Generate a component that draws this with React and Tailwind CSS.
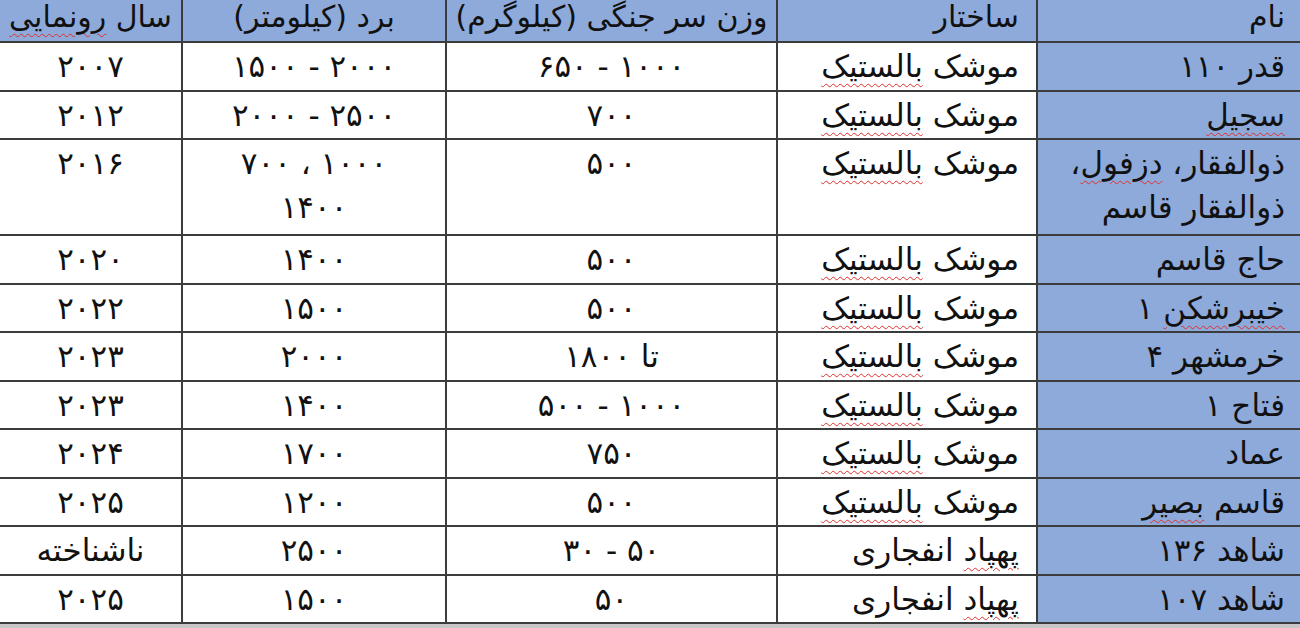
import React from "react";

const rows = [
  { name: "قدر ۱۱۰", type: "bal", warhead: "۱۰۰۰ - ۶۵۰", range: "۲۰۰۰ - ۱۵۰۰", year: "۲۰۰۷" },
  { name: <Wavy>سجیل</Wavy>, type: "bal", warhead: "۷۰۰", range: "۲۵۰۰ - ۲۰۰۰", year: "۲۰۱۲" },
  {
    name: (
      <>
        ذوالفقار، <Wavy>دزفول</Wavy>،
        <br />
        ذوالفقار قاسم
      </>
    ),
    type: "bal",
    warhead: "۵۰۰",
    range: (
      <>
        ۱۰۰۰ ، ۷۰۰
        <br />
        ۱۴۰۰
      </>
    ),
    year: "۲۰۱۶",
    tall: true,
  },
  { name: "حاج قاسم", type: "bal", warhead: "۵۰۰", range: "۱۴۰۰", year: "۲۰۲۰" },
  { name: <><Wavy>خیبرشکن</Wavy> ۱</>, type: "bal", warhead: "۵۰۰", range: "۱۵۰۰", year: "۲۰۲۲" },
  { name: "خرمشهر ۴", type: "bal", warhead: "تا ۱۸۰۰", range: "۲۰۰۰", year: "۲۰۲۳" },
  { name: "فتاح ۱", type: "bal", warhead: "۱۰۰۰ - ۵۰۰", range: "۱۴۰۰", year: "۲۰۲۳" },
  { name: "عماد", type: "bal", warhead: "۷۵۰", range: "۱۷۰۰", year: "۲۰۲۴" },
  { name: <>قاسم <Wavy>بصیر</Wavy></>, type: "bal", warhead: "۵۰۰", range: "۱۲۰۰", year: "۲۰۲۵" },
  { name: "شاهد ۱۳۶", type: "uav", warhead: "۵۰ - ۳۰", range: "۲۵۰۰", year: "ناشناخته" },
  { name: "شاهد ۱۰۷", type: "uav", warhead: "۵۰", range: "۱۵۰۰", year: "۲۰۲۵" },
];

function Wavy({ children }) {
  return (
    <span className="underline decoration-wavy decoration-[#e0302a] decoration-1 underline-offset-[6px]">
      {children}
    </span>
  );
}

function TypeCell({ type }) {
  if (type === "uav") {
    return (
      <>
        <Wavy>پهپاد</Wavy> انفجاری
      </>
    );
  }
  return (
    <>
      موشک <Wavy>بالستیک</Wavy>
    </>
  );
}

const cell = "border-2 border-[#3c3c3c] align-top pt-[1px] leading-[44px]";
const head = "border-2 border-t-0 border-[#3c3c3c] align-top p-0 h-[42px] font-normal leading-[34px]";

export default function App() {
  return (
    <div
      className="w-[1300px] h-[628px] overflow-hidden bg-[#c6c6c6]"
      style={{ fontFamily: '"DejaVu Sans", sans-serif' }}
    >
      <table dir="rtl" className="w-[1300px] table-fixed border-collapse bg-white text-[31px] text-[#111]">
        <colgroup>
          <col className="w-[263px]" />
          <col className="w-[260px]" />
          <col className="w-[331px]" />
          <col className="w-[264px]" />
          <col className="w-[182px]" />
        </colgroup>
        <thead>
          <tr className="h-[42px] bg-[#8eaadb] text-[30px]">
            <th className={`${head} border-r-0 pr-[15px] text-right`}>نام</th>
            <th className={`${head} pr-[17px] text-right`}>ساختار</th>
            <th className={`${head} text-center`}>وزن سر جنگی (کیلوگرم)</th>
            <th className={`${head} text-center`}>برد (کیلومتر)</th>
            <th className={`${head} border-l-0 text-center`}>
              سال <Wavy>رونمایی</Wavy>
            </th>
          </tr>
        </thead>
        <tbody>
          {rows.map((r, i) => (
            <tr key={i} className={r.tall ? "h-[96px]" : "h-[48.5px]"}>
              <td className={`${cell} border-r-0 bg-[#8eaadb] pr-[15px] text-right`}>{r.name}</td>
              <td className={`${cell} pr-[17px] text-right`}>
                <TypeCell type={r.type} />
              </td>
              <td className={`${cell} text-center`}>{r.warhead}</td>
              <td className={`${cell} text-center`}>{r.range}</td>
              <td className={`${cell} border-l-0 text-center`}>{r.year}</td>
            </tr>
          ))}
        </tbody>
      </table>
    </div>
  );
}
